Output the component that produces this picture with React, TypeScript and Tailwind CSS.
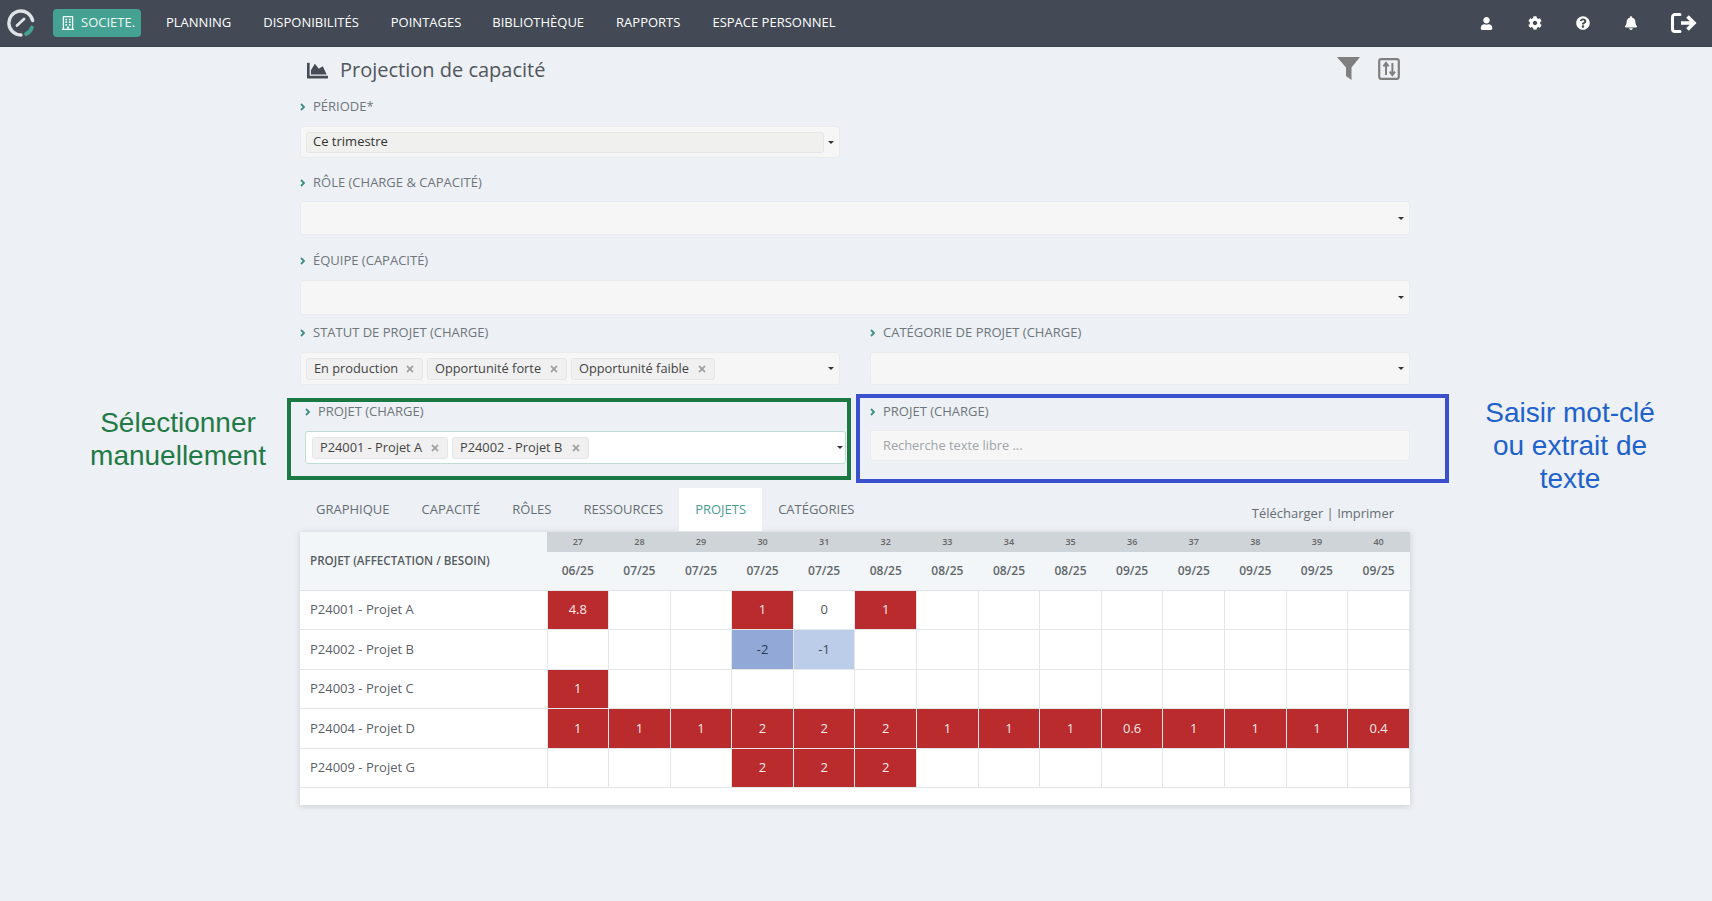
import type { ReactNode } from "react";
import {
  FaBell,
  FaChartArea,
  FaCog,
  FaQuestionCircle,
  FaRegBuilding,
  FaTimes,
  FaUser,
} from "react-icons/fa";

const NAV = [
  { label: "PLANNING", cls: "ml-[25px]" },
  { label: "DISPONIBILITÉS", cls: "ml-[32px]" },
  { label: "POINTAGES", cls: "ml-[32px]" },
  { label: "BIBLIOTHÈQUE", cls: "ml-[31px]" },
  { label: "RAPPORTS", cls: "ml-[32px]" },
  { label: "ESPACE PERSONNEL", cls: "ml-[32px]" },
];

const TABS = ["GRAPHIQUE", "CAPACITÉ", "RÔLES", "RESSOURCES", "PROJETS", "CATÉGORIES"];

const WEEKS = [27, 28, 29, 30, 31, 32, 33, 34, 35, 36, 37, 38, 39, 40];
const MONTHS = [
  "06/25", "07/25", "07/25", "07/25", "07/25", "08/25", "08/25",
  "08/25", "08/25", "09/25", "09/25", "09/25", "09/25", "09/25",
];

type Cell = "" | number;

const ROWS: { name: string; cells: Cell[] }[] = [
  { name: "P24001 - Projet A", cells: [4.8, "", "", 1, 0, 1, "", "", "", "", "", "", "", ""] },
  { name: "P24002 - Projet B", cells: ["", "", "", -2, -1, "", "", "", "", "", "", "", "", ""] },
  { name: "P24003 - Projet C", cells: [1, "", "", "", "", "", "", "", "", "", "", "", "", ""] },
  { name: "P24004 - Projet D", cells: [1, 1, 1, 2, 2, 2, 1, 1, 1, 0.6, 1, 1, 1, 0.4] },
  { name: "P24009 - Projet G", cells: ["", "", "", 2, 2, 2, "", "", "", "", "", "", "", ""] },
];

function cellColor(value: Cell) {
  if (value === "" || value === 0) return "bg-white text-[#555]";
  if (value === -2) return "bg-[#92a9d8] text-[#2b3a55]";
  if (value === -1) return "bg-[#bccde9] text-[#3b4a63]";
  return "bg-[#b92b2c] text-[#f6eaea]";
}

function Logo() {
  return (
    <svg viewBox="0 0 28 30" className="ml-[7px] h-[30px] w-[28px]" fill="none">
      <path d="M25.6 12.5A12 12 0 1 0 14 27" stroke="#dfe3e6" strokeWidth="3.4" strokeLinecap="round" />
      <path d="M25 19.5A12 12 0 0 1 19 26" stroke="#45a292" strokeWidth="3.8" strokeLinecap="round" />
      <path d="M10 17.5L17 11" stroke="#dfe3e6" strokeWidth="2.8" strokeLinecap="round" />
    </svg>
  );
}

function Chevron() {
  return (
    <svg viewBox="0 0 6 8" className="h-[8px] w-[6px] shrink-0" fill="none">
      <path d="M1 1l3 3-3 3" stroke="#3d8f83" strokeWidth="1.8" />
    </svg>
  );
}

function Caret() {
  return <span className="h-0 w-0 shrink-0 border-x-[3px] border-t-[3px] border-x-transparent border-t-[#333]" />;
}

function Label({ children }: { children: ReactNode }) {
  return (
    <div className="flex h-[20px] items-center gap-[7px] text-[13px] text-[#6e767c]">
      <Chevron />
      <span>{children}</span>
    </div>
  );
}

function Tag({ label, width }: { label: string; width: string }) {
  return (
    <span className={`flex h-[22px] items-center justify-between rounded-[3px] border border-[#e6e6e6] bg-[#f0f0f0] px-[7px] text-[12.8px] text-[#444] ${width}`}>
      {label}
      <FaTimes className="text-[10px] text-[#a0a0a0]" />
    </span>
  );
}

function Select({ height, top = "mt-[8px]", children }: { height: string; top?: string; children?: ReactNode }) {
  return (
    <div className={`${top} flex items-center rounded-[3px] border border-[#e9ebed] bg-[#f6f6f6] pl-[5px] pr-[5px] ${height}`}>
      <div className="flex min-w-0 flex-1 items-center gap-[4px]">{children}</div>
      <Caret />
    </div>
  );
}

function Toolbar() {
  return (
    <header className="flex h-[47px] items-center border-b border-[#3c434d] bg-[#434a55] text-[13px] text-white">
      <Logo />
      <div className="ml-[18px] flex h-[28px] w-[88px] items-center gap-[6px] rounded-[4px] bg-[#45a292] pl-[8px] text-[#eef7f5]">
        <FaRegBuilding className="text-[14px]" />
        SOCIETE.
      </div>
      {NAV.map((item) => (
        <span key={item.label} className={item.cls}>{item.label}</span>
      ))}
      <div className="ml-auto mr-[15px] flex items-center">
        <FaUser className="text-[13px]" />
        <FaCog className="ml-[35px] text-[14px]" />
        <FaQuestionCircle className="ml-[34px] text-[14px]" />
        <FaBell className="ml-[34px] text-[14px]" />
        <svg viewBox="0 0 26 20" className="ml-[33px] h-[20px] w-[26px]" fill="none" stroke="white">
          <path d="M9 1.5H4a2.5 2.5 0 0 0-2.5 2.5v12A2.5 2.5 0 0 0 4 18.5h5" strokeWidth="3" strokeLinecap="round" />
          <path d="M10 10h13M16.5 3.5L23 10l-6.500 6.500" strokeWidth="3.6" />
        </svg>
      </div>
    </header>
  );
}

function CapacityTable() {
  return (
    <div className="bg-white pb-[17px] shadow-[0_1px_6px_rgba(90,100,110,0.25)]">
      <table className="w-full table-fixed border-collapse">
        <colgroup>
          <col className="w-[247px]" />
        </colgroup>
        <thead>
          <tr className="h-[20px]">
            <th rowSpan={2} className="border-b border-[#e0e4e7] bg-[#f3f6f8] pl-[10px] text-left text-[11.6px] font-semibold text-[#555c62]">
              PROJET (AFFECTATION / BESOIN)
            </th>
            {WEEKS.map((week) => (
              <th key={week} className="bg-[#cfd4d8] text-[9px] font-semibold text-[#666]">{week}</th>
            ))}
          </tr>
          <tr className="h-[38px]">
            {MONTHS.map((month, i) => (
              <th key={i} className="border-b border-[#e0e4e7] bg-[#f3f6f8] text-[12px] font-semibold text-[#5f666c]">{month}</th>
            ))}
          </tr>
        </thead>
        <tbody>
          {ROWS.map((row) => (
            <tr key={row.name} className="h-[39.6px]">
              <td className="border-b border-[#e4e7ea] pl-[10px] text-[13px] text-[#5b6268]">{row.name}</td>
              {row.cells.map((value, i) => (
                <td key={i} className={`border border-t-0 border-[#e4e7ea] text-center text-[13px] ${cellColor(value)}`}>
                  {value}
                </td>
              ))}
            </tr>
          ))}
        </tbody>
      </table>
    </div>
  );
}

export default function App() {
  return (
    <div className="relative h-[901px] overflow-hidden bg-[#edf0f4] font-['Open_Sans',sans-serif]">
      <Toolbar />

      <main className="ml-[300px] w-[1110px]">
        <div className="flex h-[46px] items-center text-[#565c62]">
          <FaChartArea className="ml-[7px] text-[21px] text-[#444b54]" />
          <h1 className="ml-[12px] text-[20px] text-[#50565c]">Projection de capacité</h1>
          <svg viewBox="0 0 23 23" className="mb-[3px] ml-auto h-[23px] w-[23px]" fill="#7f7f7f">
            <path d="M0 0h23l-8.500 10.500V23L9 19V10.500z" />
          </svg>
          <svg viewBox="0 0 22 22" className="mb-[2px] ml-[18px] mr-[10px] h-[22px] w-[22px]" fill="none">
            <rect x="1.2" y="1.2" width="19.6" height="19.6" rx="2" stroke="#7f7f7f" strokeWidth="2.2" />
            <path d="M8 17V6M5.4 8.400L8 5l2.600 3.400M14.400 5v11M11.800 13.600l2.600 3.400 2.600-3.400" stroke="#7f7f7f" strokeWidth="2" />
          </svg>
        </div>

        <div className="mt-[4px] w-[540px]">
          <Label>PÉRIODE*</Label>
          <Select height="h-[32px]" top="mt-[9px]">
            <div className="flex h-[21px] w-[518px] flex-none items-center rounded-[3px] border border-[#e6e6e4] bg-[#f0f0ee] pl-[6px] text-[13px] text-[#333]">
              Ce trimestre
            </div>
          </Select>
        </div>

        <div className="mt-[15px]">
          <Label>RÔLE (CHARGE &amp; CAPACITÉ)</Label>
          <Select height="h-[34px]" />
        </div>

        <div className="mt-[16px]">
          <Label>ÉQUIPE (CAPACITÉ)</Label>
          <Select height="h-[35px]" top="mt-[9px]" />
        </div>

        <div className="mt-[8px] grid grid-cols-[540px_540px] gap-x-[30px]">
          <div>
            <Label>STATUT DE PROJET (CHARGE)</Label>
            <Select height="h-[33px]" top="mt-[9px]">
              <Tag label="En production" width="w-[117px]" />
              <Tag label="Opportunité forte" width="w-[140px]" />
              <Tag label="Opportunité faible" width="w-[144px]" />
            </Select>
          </div>
          <div>
            <Label>CATÉGORIE DE PROJET (CHARGE)</Label>
            <Select height="h-[33px]" top="mt-[9px]" />
          </div>

          <div className="ml-[5px] mt-[17px] w-[541px]">
            <Label>PROJET (CHARGE)</Label>
            <div className="mt-[9px] flex h-[33px] items-center rounded-[3px] border border-[#bfdcd6] bg-white pl-[6px] pr-[2px]">
              <div className="flex flex-1 items-center gap-[4px]">
                <Tag label="P24001 - Projet A" width="w-[136px]" />
                <Tag label="P24002 - Projet B" width="w-[137px]" />
              </div>
              <Caret />
            </div>
          </div>
          <div className="mt-[17px]">
            <Label>PROJET (CHARGE)</Label>
            <div className="mt-[8px] flex h-[31px] items-center rounded-[3px] border border-[#e9ebed] bg-[#f6f6f6] pl-[12px] text-[12.8px] text-[#a0a4a8]">
              Recherche texte libre ...
            </div>
          </div>
        </div>

        <div className="mt-[24px] flex h-[43px] items-center text-[13px] text-[#666e74]">
          {TABS.map((tab) => (
            <span
              key={tab}
              className={
                tab === "PROJETS"
                  ? "flex h-full items-center bg-white px-[16px] text-[#4b9e8f]"
                  : "flex h-full items-center px-[16px]"
              }
            >
              {tab}
            </span>
          ))}
          <span className="ml-auto mr-[16px] mt-[8px] text-[13px] text-[#666e74]">Télécharger | Imprimer</span>
        </div>

        <div className="mt-[1px]">
          <CapacityTable />
        </div>
      </main>

      {/* Annotations posées sur la capture */}
      <div className="pointer-events-none absolute left-[287px] top-[398px] h-[82px] w-[564px] border-4 border-[#1b7a43]" />
      <div className="pointer-events-none absolute left-[856px] top-[394px] h-[89px] w-[593px] border-4 border-[#3a50cc]" />
      <p className="absolute left-[78px] top-[406px] w-[200px] text-center font-['Liberation_Sans',sans-serif] text-[28px] leading-[33px] text-[#1f7a46]">
        Sélectionner manuellement
      </p>
      <p className="absolute left-[1470px] top-[396px] w-[200px] text-center font-['Liberation_Sans',sans-serif] text-[28px] leading-[33px] text-[#1e62cc]">
        Saisir mot-clé ou extrait de texte
      </p>
    </div>
  );
}
